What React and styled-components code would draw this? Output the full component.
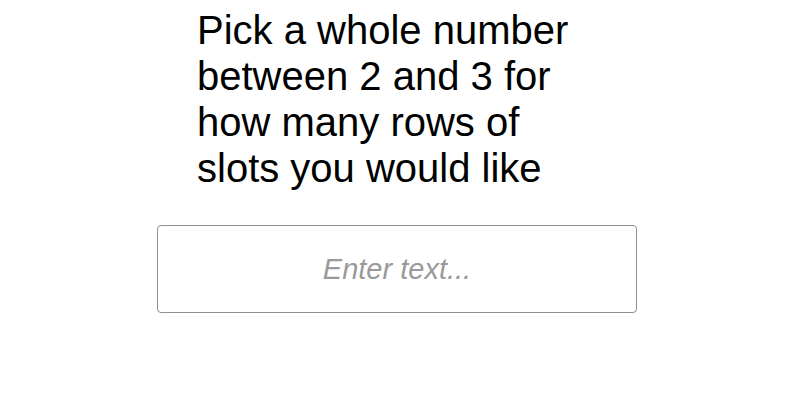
import React, { useState } from "react";
import styled, { createGlobalStyle } from "styled-components";

const GlobalStyle = createGlobalStyle`
  html, body {
    margin: 0;
    padding: 0;
    background: #ffffff;
  }
  body {
    font-family: "Liberation Sans", Arial, sans-serif;
  }
`;

const Page = styled.div`
  display: flex;
  flex-direction: column;
  width: 480px;
  padding: 7px 0 0 157px;
`;

const Prompt = styled.h1`
  margin: 0 0 34px 40px;
  width: 400px;
  font-family: "Liberation Sans", Arial, sans-serif;
  font-size: 40px;
  line-height: 46px;
  font-weight: 400;
  color: #000000;
`;

const Field = styled.input`
  box-sizing: border-box;
  width: 480px;
  height: 88px;
  border: 1px solid #8e8e8e;
  border-radius: 4px;
  background: #ffffff;
  font-family: "Liberation Sans", Arial, sans-serif;
  font-size: 29px;
  text-align: center;
  color: #000000;
  outline: none;

  &::placeholder {
    color: #9a9a9a;
    font-style: italic;
  }
`;

export default function App() {
  const [rows, setRows] = useState("");

  return (
    <>
      <GlobalStyle />
      <Page>
        <Prompt>
          Pick a whole number between 2 and 3 for how many rows of slots you
          would like
        </Prompt>
        <Field
          type="text"
          placeholder="Enter text..."
          value={rows}
          onChange={(e) => setRows(e.target.value)}
        />
      </Page>
    </>
  );
}
